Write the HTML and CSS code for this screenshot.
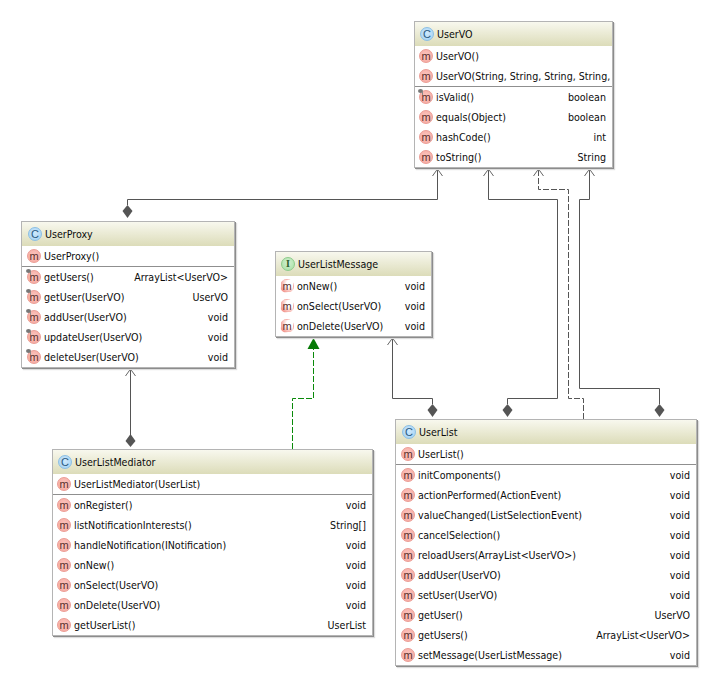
FILE: index.html
```html
<!DOCTYPE html>
<html lang="en">
<head>
<meta charset="utf-8">
<title>UML class diagram</title>
<link rel="stylesheet" href="styles.css">
</head>
<body>
<main class="canvas">
<svg class="edges" width="718" height="687" viewBox="0 0 718 687">
  <g class="solid">
    <path d="M127.5 205V199.5H437.5V169"/>
    <path d="M432.5 404V398.5H392.5V338"/>
    <path d="M507.5 404V398.5H557.5V199.5H488.5V169"/>
    <path d="M659.5 404V388.5H579.5V199.5H589.5V169"/>
    <path d="M130.5 369V435"/>
  </g>
  <path class="dash" d="M583.5 419V398.5H568.5V189.5H538.5V169"/>
  <path class="dash green" d="M292.5 449V398.5H313.5V349"/>
  <g class="arrow">
    <path d="M432.5 176L437.5 169L442.5 176"/>
    <path d="M483.5 176L488.5 169L493.5 176"/>
    <path d="M533.5 176L538.5 169L543.5 176"/>
    <path d="M584.5 176L589.5 169L594.5 176"/>
    <path d="M387.5 345L392.5 338L397.5 345"/>
    <path d="M125.5 376L130.5 369L135.5 376"/>
  </g>
  <polygon class="tri" points="313.5,338 319.5,349 307.5,349"/>
  <g class="dia">
    <polygon points="127.5,205 132.5,211 127.5,218 122.5,211"/>
    <polygon points="130.5,434 135.5,441 130.5,447 125.5,441"/>
    <polygon points="432.5,404 437.5,410 432.5,417 427.5,410"/>
    <polygon points="507.5,404 512.5,410 507.5,417 502.5,410"/>
    <polygon points="659.5,404 664.5,410 659.5,417 654.5,410"/>
  </g>
</svg>

<section class="node uservo">
  <header class="head"><i class="ic c">C</i>UserVO</header>
  <div class="group">
    <div class="row"><i class="ic m">m</i><span class="name">UserVO()</span></div>
    <div class="row"><i class="ic m">m</i><span class="name">UserVO(String, String, String, String,</span></div>
  </div>
  <div class="group">
    <div class="row"><i class="ic m pin">m</i><span class="name">isValid()</span><span class="type">boolean</span></div>
    <div class="row"><i class="ic m">m</i><span class="name">equals(Object)</span><span class="type">boolean</span></div>
    <div class="row"><i class="ic m">m</i><span class="name">hashCode()</span><span class="type">int</span></div>
    <div class="row"><i class="ic m">m</i><span class="name">toString()</span><span class="type">String</span></div>
  </div>
</section>

<section class="node userproxy inset">
  <header class="head"><i class="ic c">C</i>UserProxy</header>
  <div class="group">
    <div class="row"><i class="ic m">m</i><span class="name">UserProxy()</span></div>
  </div>
  <div class="group">
    <div class="row"><i class="ic m pin">m</i><span class="name">getUsers()</span><span class="type">ArrayList&lt;UserVO&gt;</span></div>
    <div class="row"><i class="ic m pin">m</i><span class="name">getUser(UserVO)</span><span class="type">UserVO</span></div>
    <div class="row"><i class="ic m pin">m</i><span class="name">addUser(UserVO)</span><span class="type">void</span></div>
    <div class="row"><i class="ic m pin">m</i><span class="name">updateUser(UserVO)</span><span class="type">void</span></div>
    <div class="row"><i class="ic m pin">m</i><span class="name">deleteUser(UserVO)</span><span class="type">void</span></div>
  </div>
</section>

<section class="node message">
  <header class="head"><i class="ic n">I</i>UserListMessage</header>
  <div class="group">
    <div class="row"><i class="ic m abs">m</i><span class="name">onNew()</span><span class="type">void</span></div>
    <div class="row"><i class="ic m abs">m</i><span class="name">onSelect(UserVO)</span><span class="type">void</span></div>
    <div class="row"><i class="ic m abs">m</i><span class="name">onDelete(UserVO)</span><span class="type">void</span></div>
  </div>
</section>

<section class="node mediator">
  <header class="head"><i class="ic c">C</i>UserListMediator</header>
  <div class="group">
    <div class="row"><i class="ic m">m</i><span class="name">UserListMediator(UserList)</span></div>
  </div>
  <div class="group">
    <div class="row"><i class="ic m">m</i><span class="name">onRegister()</span><span class="type">void</span></div>
    <div class="row"><i class="ic m">m</i><span class="name">listNotificationInterests()</span><span class="type">String[]</span></div>
    <div class="row"><i class="ic m">m</i><span class="name">handleNotification(INotification)</span><span class="type">void</span></div>
    <div class="row"><i class="ic m">m</i><span class="name">onNew()</span><span class="type">void</span></div>
    <div class="row"><i class="ic m">m</i><span class="name">onSelect(UserVO)</span><span class="type">void</span></div>
    <div class="row"><i class="ic m">m</i><span class="name">onDelete(UserVO)</span><span class="type">void</span></div>
    <div class="row"><i class="ic m">m</i><span class="name">getUserList()</span><span class="type">UserList</span></div>
  </div>
</section>

<section class="node userlist inset">
  <header class="head"><i class="ic c">C</i>UserList</header>
  <div class="group">
    <div class="row"><i class="ic m">m</i><span class="name">UserList()</span></div>
  </div>
  <div class="group">
    <div class="row"><i class="ic m">m</i><span class="name">initComponents()</span><span class="type">void</span></div>
    <div class="row"><i class="ic m">m</i><span class="name">actionPerformed(ActionEvent)</span><span class="type">void</span></div>
    <div class="row"><i class="ic m">m</i><span class="name">valueChanged(ListSelectionEvent)</span><span class="type">void</span></div>
    <div class="row"><i class="ic m">m</i><span class="name">cancelSelection()</span><span class="type">void</span></div>
    <div class="row"><i class="ic m">m</i><span class="name">reloadUsers(ArrayList&lt;UserVO&gt;)</span><span class="type">void</span></div>
    <div class="row"><i class="ic m">m</i><span class="name">addUser(UserVO)</span><span class="type">void</span></div>
    <div class="row"><i class="ic m">m</i><span class="name">setUser(UserVO)</span><span class="type">void</span></div>
    <div class="row"><i class="ic m">m</i><span class="name">getUser()</span><span class="type">UserVO</span></div>
    <div class="row"><i class="ic m">m</i><span class="name">getUsers()</span><span class="type">ArrayList&lt;UserVO&gt;</span></div>
    <div class="row"><i class="ic m">m</i><span class="name">setMessage(UserListMessage)</span><span class="type">void</span></div>
  </div>
</section>
</main>
</body>
</html>
```
FILE: styles.css
```css
* { box-sizing: border-box; }
html, body { margin: 0; padding: 0; background: #fff; }
.canvas { position: relative; width: 718px; height: 687px; overflow: hidden; font-family: "DejaVu Sans Condensed", "Liberation Sans", Arial, sans-serif; font-size: 10.6px; color: #0c0c0c; }
.edges { position: absolute; left: 0; top: 0; }
.solid path { fill: none; stroke: #555; stroke-width: 1; }
.dash { fill: none; stroke: #555; stroke-width: 1; stroke-dasharray: 6 2; }
.dash.green { stroke: #0a8a0a; }
.arrow path { fill: none; stroke: #666; stroke-width: 1; }
.tri { fill: #067a06; }
.dia polygon { fill: #555; }
.node { position: absolute; background: #fff; border: 1px solid #b4b4b4; box-shadow: 1px 1px 0 #8c8c8c, 2px 2px 1px #ddd; overflow: hidden; }
.uservo { left: 414px; top: 21px; width: 199px; height: 147px; }
.userproxy { left: 21px; top: 221px; width: 214px; height: 147px; }
.message { left: 275px; top: 251px; width: 157px; height: 86px; }
.mediator { left: 52px; top: 449px; width: 321px; height: 187px; }
.userlist { left: 395px; top: 419px; width: 302px; height: 247px; }
.head { display: flex; align-items: center; gap: 3px; height: 24px; padding-left: 5px; background: linear-gradient(#f8f8ee, #dcdcb9); }
.group + .group { border-top: 1px solid #8f8f8f; }
.row { display: flex; align-items: center; justify-content: space-between; height: 20px; padding: 0 6px 0 4px; white-space: nowrap; }
.inset .head { padding-left: 6px; }
.inset .row { padding-left: 5px; }
.name { flex: 0 0 auto; margin-left: 3px; margin-right: auto; }
.type { flex: 0 0 auto; }
.ic { position: relative; flex: 0 0 auto; display: flex; align-items: center; justify-content: center; width: 14px; height: 14px; border-radius: 50%; font-style: normal; font-family: "Liberation Sans", sans-serif; font-size: 11px; line-height: 1; color: #333; }
.ic.m { background: radial-gradient(circle at 50% 40%, #fbc3bc, #f5a8a0); border: 1px solid #ec9c94; color: #5a2f2b; }
.ic.c { background: radial-gradient(circle at 50% 40%, #cfe8fb, #9fd0f3); border: 1px solid #8cbfe4; color: #2a5a80; }
.ic.n { background: radial-gradient(circle at 50% 40%, #d2f0d0, #a6dfa4); border: 1px solid #8ccb8a; color: #2d5d2c; font-family: "Liberation Serif", serif; font-size: 10px; font-weight: bold; }
.ic.abs { background: radial-gradient(circle at 78% 30%, #fff 30%, #f39a91 80%); border-color: transparent; }
.ic.pin::before { content: ""; position: absolute; left: -2px; top: -2px; width: 5px; height: 4px; border-radius: 50%; background: #777; }
.ic.pin::after { content: ""; position: absolute; left: 2px; top: 1px; width: 1px; height: 3px; background: #888; }
```
